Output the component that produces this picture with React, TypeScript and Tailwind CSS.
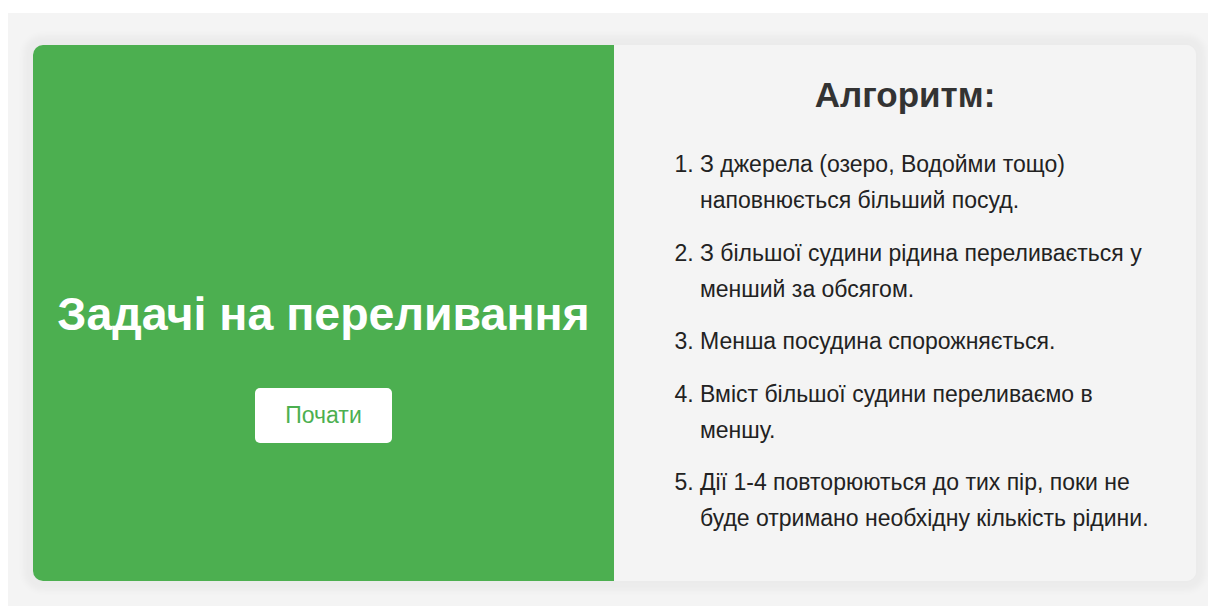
const steps = [
  "З джерела (озеро, Водойми тощо) наповнюється більший посуд.",
  "З більшої судини рідина переливається у менший за обсягом.",
  "Менша посудина спорожняється.",
  "Вміст більшої судини переливаємо в меншу.",
  "Дії 1-4 повторюються до тих пір, поки не буде отримано необхідну кількість рідини.",
];

export default function App() {
  return (
    <div className="min-h-screen bg-white pl-[8px] pt-[13px] font-['Liberation_Sans',Arial,sans-serif]">
      <div className="h-[593px] w-[1200px] bg-[#f4f4f4] pl-[25px] pt-[32px]">
        <div className="flex h-[536px] w-[1163px] overflow-hidden rounded-[10px] shadow-[0_0_6px_10px_rgba(0,0,0,0.035)]">
          <section className="flex w-[581px] flex-col items-center justify-center bg-[#4caf50] pt-[103px]">
            <h1 className="text-[46.5px] leading-[54px] font-bold text-white">Задачі на переливання</h1>
            <button className="mt-[47px] rounded-[5px] bg-white px-[30px] py-[14.5px] text-[23px] leading-[26px] text-[#4caf50]">
              Почати
            </button>
          </section>

          <section className="flex-1 bg-[#f4f4f4] px-[40px] pt-[30px]">
            <h2 className="text-center text-[35px] leading-[40px] font-bold text-[#333]">Алгоритм:</h2>
            <ol className="mt-[31px] list-decimal pl-[46px] text-[23px] leading-[36px] text-[#222]">
              {steps.map((step) => (
                <li key={step} className="mb-[16.5px]">
                  {step}
                </li>
              ))}
            </ol>
          </section>
        </div>
      </div>
    </div>
  );
}
